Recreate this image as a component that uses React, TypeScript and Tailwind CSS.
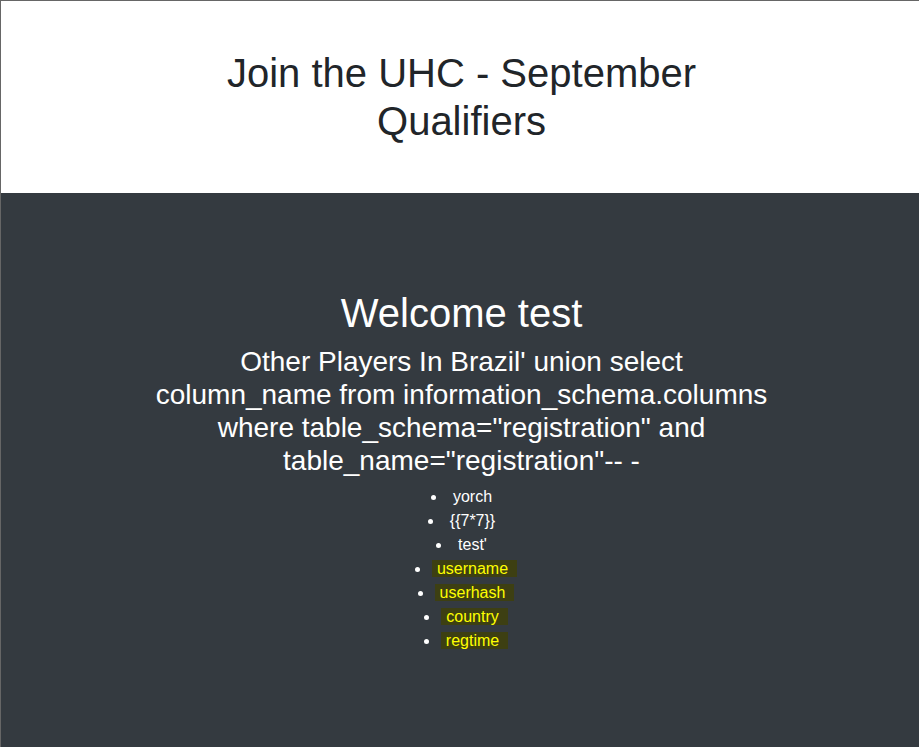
import React from "react";

const items: { text: string; hl?: boolean }[] = [
  { text: "yorch" },
  { text: "{{7*7}}" },
  { text: "test'" },
  { text: "username", hl: true },
  { text: "userhash", hl: true },
  { text: "country", hl: true },
  { text: "regtime", hl: true },
];

export default function App() {
  return (
    <div
      className="min-h-[747px] border-l border-t border-[#666666] bg-[#343a40]"
      style={{ fontFamily: '"Liberation Sans", Arial, sans-serif' }}
    >
      <header className="bg-white pl-[3px] pt-12 pb-12">
        <h1 className="mx-auto max-w-[520px] text-center text-[40px] leading-[48px] text-[#212529]">
          Join the UHC - September Qualifiers
        </h1>
      </header>
      <main className="pl-[3px] pt-24 text-center text-white">
        <h1 className="mb-2 text-[40px] leading-[48px]">Welcome test</h1>
        <h3 className="mx-auto mt-0 max-w-[615px] text-[28px] leading-[33px]">
          Other Players In Brazil' union select column_name from information_schema.columns where table_schema="registration" and table_name="registration"-- -
        </h3>
        <ul className="mt-2 list-inside list-disc text-[16px] leading-[24px] text-white">
          {items.map((it, i) => (
            <li key={i}>
              {it.hl ? (
                <span className="-ml-[5px] -mr-[9px] bg-[#3d3f12] pl-[5px] pr-[9px] text-[#ffff00]">{it.text}</span>
              ) : (
                it.text
              )}
            </li>
          ))}
        </ul>
      </main>
    </div>
  );
}
